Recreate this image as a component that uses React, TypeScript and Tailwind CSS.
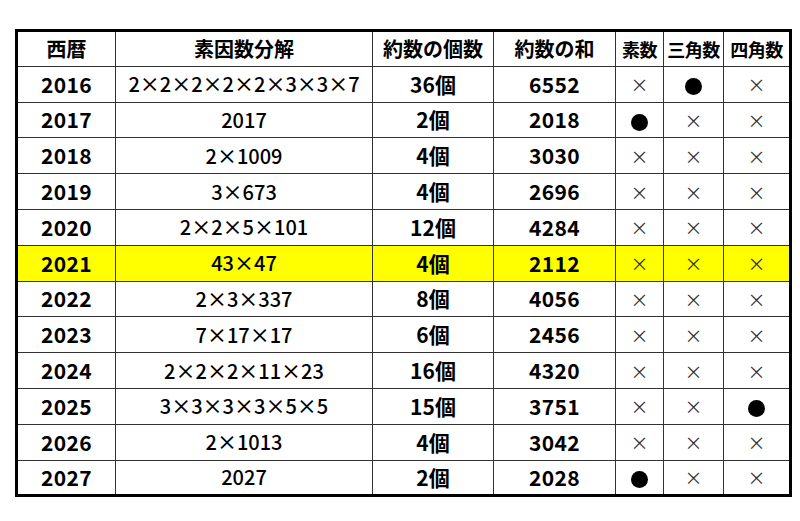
import React from 'react';

type Row = {
  year: string;
  factors: string;
  count: string;
  sum: string;
  prime: boolean;
  tri: boolean;
  square: boolean;
  highlight?: boolean;
};

const rows: Row[] = [
  { year: '2016', factors: '2×2×2×2×2×3×3×7', count: '36個', sum: '6552', prime: false, tri: true, square: false },
  { year: '2017', factors: '2017', count: '2個', sum: '2018', prime: true, tri: false, square: false },
  { year: '2018', factors: '2×1009', count: '4個', sum: '3030', prime: false, tri: false, square: false },
  { year: '2019', factors: '3×673', count: '4個', sum: '2696', prime: false, tri: false, square: false },
  { year: '2020', factors: '2×2×5×101', count: '12個', sum: '4284', prime: false, tri: false, square: false },
  { year: '2021', factors: '43×47', count: '4個', sum: '2112', prime: false, tri: false, square: false, highlight: true },
  { year: '2022', factors: '2×3×337', count: '8個', sum: '4056', prime: false, tri: false, square: false },
  { year: '2023', factors: '7×17×17', count: '6個', sum: '2456', prime: false, tri: false, square: false },
  { year: '2024', factors: '2×2×2×11×23', count: '16個', sum: '4320', prime: false, tri: false, square: false },
  { year: '2025', factors: '3×3×3×3×5×5', count: '15個', sum: '3751', prime: false, tri: false, square: true },
  { year: '2026', factors: '2×1013', count: '4個', sum: '3042', prime: false, tri: false, square: false },
  { year: '2027', factors: '2027', count: '2個', sum: '2028', prime: true, tri: false, square: false },
];

const cell = 'border border-[#333] text-center align-middle p-0 h-[35.8px]';

// ● for yes, thin × for no
function Mark({ on }: { on: boolean }) {
  if (on) {
    return <span className="inline-block w-[17px] h-[17px] rounded-full bg-black align-middle" />;
  }
  return <span className="text-[18px] font-normal text-[#333]">×</span>;
}

export default function App() {
  return (
    <div
      className="w-[800px] h-[521px] bg-white pt-[29px] pl-[15px]"
      style={{ fontFamily: '"Noto Sans CJK JP", "Noto Sans", sans-serif' }}
    >
      <table className="table-fixed border-collapse border-[3px] border-black w-[774px] text-[20px] text-black leading-none">
        <colgroup>
          <col className="w-[99px]" />
          <col className="w-[257px]" />
          <col className="w-[121px]" />
          <col className="w-[122px]" />
          <col className="w-[48px]" />
          <col className="w-[60px]" />
          <col className="w-[67px]" />
        </colgroup>
        <thead>
          <tr className="font-bold">
            <th className={cell}>西暦</th>
            <th className={cell}>素因数分解</th>
            <th className={cell}>約数の個数</th>
            <th className={cell}>約数の和</th>
            <th className={cell + ' text-[18px] tracking-[-0.5px]'}>素数</th>
            <th className={cell + ' text-[18px] tracking-[-0.5px]'}>三角数</th>
            <th className={cell + ' text-[18px] tracking-[-0.5px]'}>四角数</th>
          </tr>
        </thead>
        <tbody>
          {rows.map((r) => (
            <tr key={r.year} className={r.highlight ? 'bg-[#ffff00]' : ''}>
              <td className={cell + ' font-bold text-[21px] tracking-[0.3px]'}>{r.year}</td>
              <td className={cell + ' font-medium'}>{r.factors}</td>
              <td className={cell + ' font-bold text-[21px]'}>{r.count}</td>
              <td className={cell + ' font-bold text-[21px] tracking-[0.3px]'}>{r.sum}</td>
              <td className={cell}><Mark on={r.prime} /></td>
              <td className={cell}><Mark on={r.tri} /></td>
              <td className={cell}><Mark on={r.square} /></td>
            </tr>
          ))}
        </tbody>
      </table>
    </div>
  );
}
